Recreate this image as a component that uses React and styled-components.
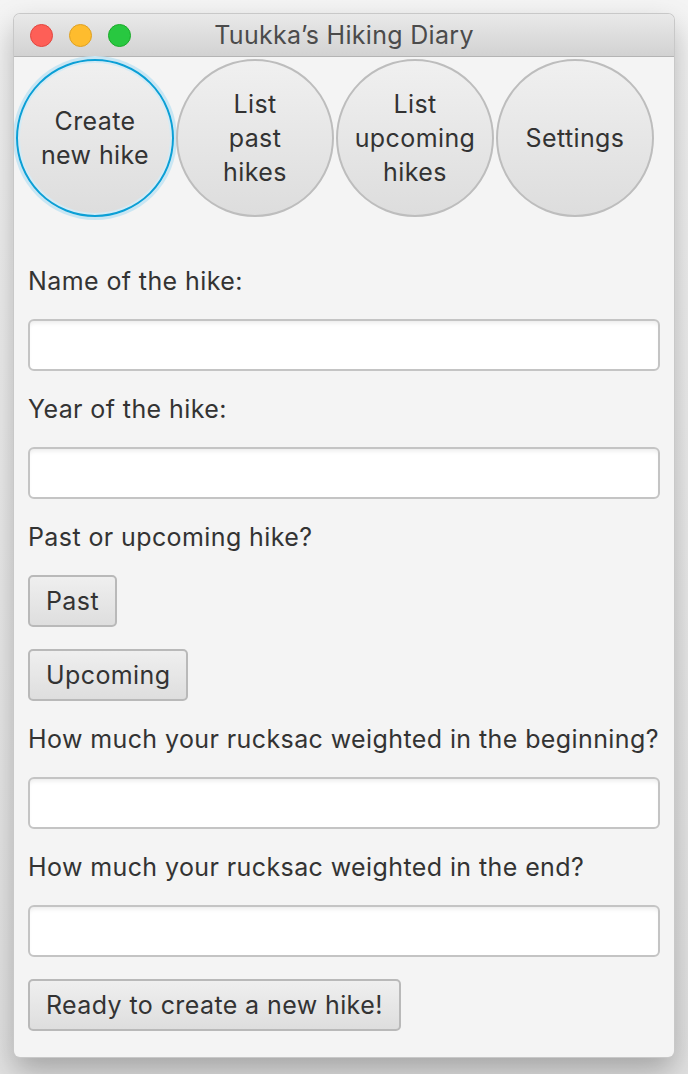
import React from "react";
import styled, { createGlobalStyle } from "styled-components";

const GlobalStyle = createGlobalStyle`
  html, body {
    margin: 0;
    padding: 0;
    background: #ececec;
  }
  body {
    font-family: Inter, "Open Sans", "Liberation Sans", sans-serif;
    color: #333;
  }
`;

const Desktop = styled.div`
  width: 688px;
  min-height: 1074px;
  box-sizing: border-box;
  padding: 14px 14px 0 14px;
  background: linear-gradient(#f4f4f4, #e2e2e2);
`;

const Window = styled.div`
  width: 660px;
  border-radius: 6px;
  overflow: hidden;
  background: #f4f4f4;
  box-shadow: 0 0 0 1px #c8c8c8, 0 14px 30px rgba(0, 0, 0, 0.28);
`;

const TitleBar = styled.div`
  height: 42px;
  display: grid;
  grid-template-columns: 1fr auto 1fr;
  align-items: center;
  background: linear-gradient(#e9e9e9, #d2d2d2);
  border-bottom: 1px solid #b4b4b4;
`;

const Lights = styled.div`
  display: flex;
  gap: 16px;
  padding-left: 16px;
`;

const Light = styled.span`
  width: 23px;
  height: 23px;
  border-radius: 50%;
  box-sizing: border-box;
  background: ${(p) => p.$color};
  border: 1px solid ${(p) => p.$edge};
`;

const Title = styled.div`
  font-size: 25px;
  letter-spacing: 0.3px;
  color: #4b4b4b;
`;

const Content = styled.div`
  padding: 2px 14px 26px 14px;
`;

const NavRow = styled.div`
  display: flex;
  gap: 2px;
  margin: 0 -12px 48px;
`;

const NavButton = styled.button`
  width: 158px;
  height: 158px;
  flex: none;
  border-radius: 50%;
  box-sizing: border-box;
  padding: 0 6px;
  border: 2px solid ${(p) => (p.$focused ? "#0a9fd6" : "#bdbdbd")};
  box-shadow: ${(p) => (p.$focused ? "0 0 0 3px #c9e6f3, inset 0 0 0 2px #d4ebf5" : "none")};
  background: linear-gradient(#f0f0f0, #dddddd);
  font-family: inherit;
  font-size: 25px;
  letter-spacing: 0.4px;
  line-height: 34px;
  color: #333;
  text-align: center;
`;

const Form = styled.div`
  display: flex;
  flex-direction: column;
  align-items: flex-start;
  gap: 22px;
`;

const Label = styled.div`
  font-size: 25px;
  letter-spacing: 0.4px;
  line-height: 32px;
  color: #333;
`;

const Field = styled.input`
  align-self: stretch;
  height: 52px;
  box-sizing: border-box;
  border: 2px solid #c4c4c4;
  border-radius: 6px;
  background: #fff;
  box-shadow: inset 0 4px 4px -2px rgba(0, 0, 0, 0.08);
  outline: none;
`;

const PushButton = styled.button`
  height: 52px;
  box-sizing: border-box;
  padding: 0 16px;
  border: 2px solid #b9b9b9;
  border-radius: 5px;
  background: linear-gradient(#efefef, #dedede);
  font-family: inherit;
  font-size: 25px;
  letter-spacing: 0.4px;
  color: #333;
`;

const navItems = [
  { id: 1, lines: ["Create", "new hike"], focused: true },
  { id: 2, lines: ["List", "past", "hikes"] },
  { id: 3, lines: ["List", "upcoming", "hikes"] },
  { id: 4, lines: ["Settings"] },
];

const App = () => {
  return (
    <>
      <GlobalStyle />
      <Desktop>
        <Window>
          <TitleBar>
            <Lights>
              <Light $color="#fe5f57" $edge="#e2463f" />
              <Light $color="#febc2e" $edge="#dea123" />
              <Light $color="#28c840" $edge="#1aab29" />
            </Lights>
            <Title>Tuukka’s Hiking Diary</Title>
            <div />
          </TitleBar>
          <Content>
            <NavRow>
              {navItems.map((item) => (
                <NavButton key={item.id} $focused={item.focused}>
                  {item.lines.map((line, i) => (
                    <div key={i}>{line}</div>
                  ))}
                </NavButton>
              ))}
            </NavRow>
            <Form>
              <Label>Name of the hike:</Label>
              <Field />
              <Label>Year of the hike:</Label>
              <Field />
              <Label>Past or upcoming hike?</Label>
              <PushButton>Past</PushButton>
              <PushButton>Upcoming</PushButton>
              <Label>How much your rucksac weighted in the beginning?</Label>
              <Field />
              <Label>How much your rucksac weighted in the end?</Label>
              <Field />
              <PushButton>Ready to create a new hike!</PushButton>
            </Form>
          </Content>
        </Window>
      </Desktop>
    </>
  );
};

export default App;
